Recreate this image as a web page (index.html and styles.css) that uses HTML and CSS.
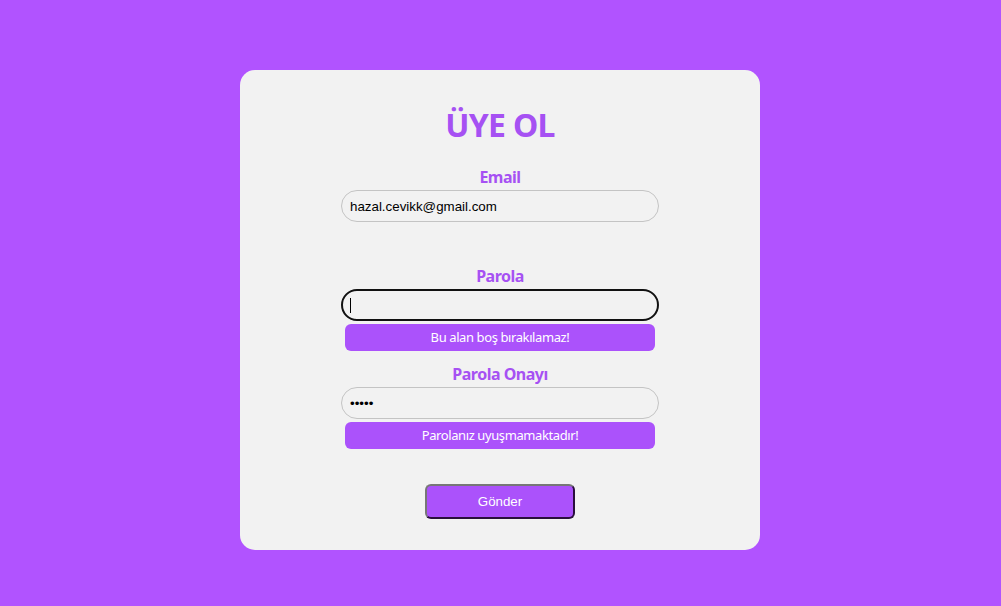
FILE: index.html
```html
<!DOCTYPE html>
<html lang="tr">
<head>
<meta charset="utf-8">
<title>Üye Ol</title>
<link rel="stylesheet" href="styles.css">
</head>
<body>
<div class="card">
  <h1 class="title">ÜYE OL</h1>
  <form class="form">
    <div class="group">
      <label class="label">Email</label>
      <input class="input" type="text" value="hazal.cevikk@gmail.com">
      <div class="error error-hidden"></div>
    </div>
    <div class="group">
      <label class="label">Parola</label>
      <div class="input input-focus"><span class="caret"></span></div>
      <div class="error">Bu alan boş bırakılamaz!</div>
    </div>
    <div class="group">
      <label class="label">Parola Onayı</label>
      <input class="input" type="password" value="12345">
      <div class="error">Parolanız uyuşmamaktadır!</div>
    </div>
    <button class="submit" type="button">Gönder</button>
  </form>
</div>
</body>
</html>
```
FILE: styles.css
```css
html, body {
  margin: 0;
  padding: 0;
}
body {
  background: #b153ff;
  width: 1000px;
  height: 606px;
  padding-top: 70px;
  box-sizing: border-box;
  font-family: "Noto Sans", "Open Sans", sans-serif;
}
.card {
  width: 520px;
  height: 480px;
  margin: 0 auto;
  box-sizing: border-box;
  padding-top: 35px;
  background: #f2f2f2;
  border-radius: 15px;
  display: flex;
  flex-direction: column;
  align-items: center;
}
.title {
  margin: 0;
  font-size: 32px;
  line-height: 40px;
  font-weight: 700;
  letter-spacing: -0.7px;
  color: #a651f3;
}
.form {
  width: 318px;
  margin-top: 22px;
  display: flex;
  flex-direction: column;
  align-items: center;
}
.group {
  width: 100%;
  display: flex;
  flex-direction: column;
  align-items: center;
  margin-bottom: 13px;
}
.label {
  font-size: 16px;
  line-height: 20px;
  font-weight: 700;
  letter-spacing: -0.5px;
  color: #a651f3;
  margin-bottom: 3px;
}
.input {
  width: 318px;
  height: 32px;
  box-sizing: border-box;
  border: 1px solid #c4c4c4;
  border-radius: 16px;
  background: #f2f2f2;
  padding: 0 8px;
  font-family: "Liberation Sans", Arial, sans-serif;
  font-size: 13.33px;
  color: #000;
  outline: none;
}
.input-focus {
  border: 2px solid #111;
  display: flex;
  align-items: center;
  padding-left: 7px;
}
.caret {
  width: 1px;
  height: 15px;
  background: #000;
}
.error {
  width: 310px;
  height: 27px;
  margin-top: 3px;
  box-sizing: border-box;
  border-radius: 6px;
  background: #ab52fb;
  color: #fff;
  font-size: 13px;
  letter-spacing: -0.4px;
  line-height: 27px;
  text-align: center;
}
.error-hidden {
  visibility: hidden;
  margin-top: 4px;
}
.submit {
  margin-top: 22px;
  width: 150px;
  height: 35px;
  border-radius: 6px;
  border: 2px solid;
  border-color: #777 #2a0f3d #2a0f3d #777;
  background: #ab52fb;
  color: #fff;
  font-family: "Liberation Sans", Arial, sans-serif;
  font-size: 13.33px;
}
```
